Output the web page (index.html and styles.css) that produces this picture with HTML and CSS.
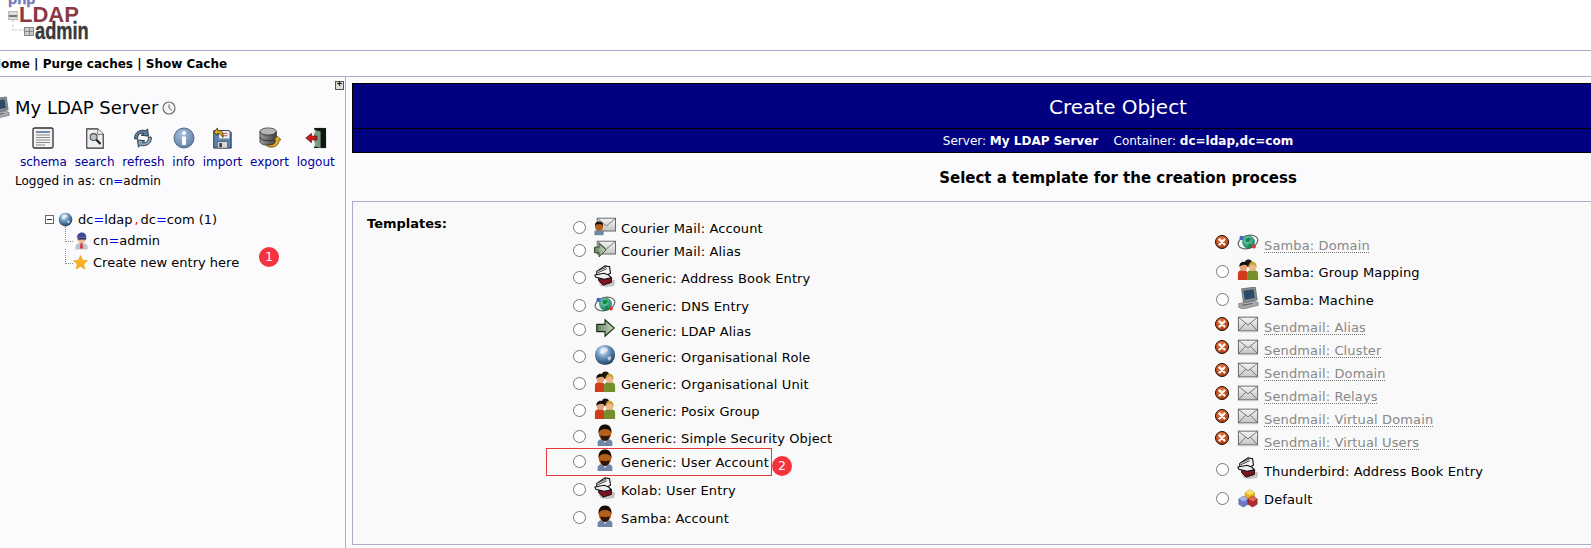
FILE: index.html
```html
<!DOCTYPE html>
<html lang="en">
<head>
<meta charset="utf-8">
<title>phpLDAPadmin</title>
<link rel="stylesheet" href="styles.css">
</head>
<body>
<svg class="defs" width="0" height="0" aria-hidden="true">
  <defs>
    <linearGradient id="gMail" x1="0" y1="0" x2="0" y2="1"><stop offset="0" stop-color="#f4f4f4"/><stop offset="1" stop-color="#c4c4c4"/></linearGradient>
    <linearGradient id="gArrow" x1="0" y1="0" x2="1" y2="0"><stop offset="0" stop-color="#5f7f58"/><stop offset="1" stop-color="#cfe0c6"/></linearGradient>
    <radialGradient id="gGlobe" cx=".4" cy=".3" r=".8"><stop offset="0" stop-color="#e8f0f8"/><stop offset=".45" stop-color="#5f8db8"/><stop offset="1" stop-color="#12304f"/></radialGradient>
    <radialGradient id="gGreen" cx=".4" cy=".35" r=".7"><stop offset="0" stop-color="#7fd8c0"/><stop offset="1" stop-color="#0c7a52"/></radialGradient>
    <radialGradient id="gErr" cx=".4" cy=".3" r=".8"><stop offset="0" stop-color="#ee7a40"/><stop offset="1" stop-color="#a83208"/></radialGradient>
    <radialGradient id="gInfo" cx=".4" cy=".3" r=".8"><stop offset="0" stop-color="#a8c0dc"/><stop offset="1" stop-color="#5878a0"/></radialGradient>
    <linearGradient id="gDb" x1="0" y1="0" x2="1" y2="0"><stop offset="0" stop-color="#9a9a9a"/><stop offset="1" stop-color="#404040"/></linearGradient>

    <symbol id="i-mail" viewBox="0 0 24 20">
      <rect x="1.500" y="2.500" width="21" height="15" fill="url(#gMail)" stroke="#606060"/>
      <path d="M2 3l10 8 10-8M2 17l7.500-8M22 17l-7.500-8" fill="none" stroke="#707070"/>
      <path d="M2 18.500h21" stroke="#c8c8c8"/>
    </symbol>
    <symbol id="i-user" viewBox="0 0 24 24">
      <path d="M4 24v-4c0-3 4-4 8-4s8 1 8 4v4z" fill="#6f87a6"/>
      <path d="M10 17h4l-2 4z" fill="#e8e8e8"/>
      <ellipse cx="12" cy="9.500" rx="7" ry="8.500" fill="#b4601c"/>
      <path d="M5 10C4.500 3 8 .5 12 .5s7.500 2.500 7 9.500c-1-3-3-4.500-7-4.500S6 7 5 10z" fill="#140c06"/>
      <path d="M7 12c2 1.500 8 1.500 10 0 0 4-2 6.500-5 6.500S7 16 7 12z" fill="#2e180a"/>
    </symbol>
    <symbol id="i-mailuser" viewBox="0 0 24 20">
      <rect x="3.500" y="1.500" width="20" height="14" fill="url(#gMail)" stroke="#606060"/>
      <path d="M4 2l9.500 8L23 2" fill="none" stroke="#707070"/>
      <rect x="0.500" y="15" width="10" height="5" fill="#6f87a6"/>
      <ellipse cx="5.500" cy="10.500" rx="4.500" ry="5" fill="#b4601c"/>
      <path d="M1 10c0-4 2-5 4.500-5s4.500 1 4.500 5c-1-2-2-2-4.500-2S2 8 1 10z" fill="#1e1208"/>
    </symbol>
    <symbol id="i-mailarrow" viewBox="0 0 24 20">
      <rect x="3.500" y="1.500" width="20" height="14" fill="url(#gMail)" stroke="#606060"/>
      <path d="M4 2l9.500 8L23 2" fill="none" stroke="#707070"/>
      <path d="M.5 8h5V3.500L13 11l-7.500 7.500V14h-5z" fill="url(#gArrow)" stroke="#2c3c28"/>
    </symbol>
    <symbol id="i-arrow" viewBox="0 0 24 24">
      <path d="M3 8h9V3l10 9-10 9v-5H3z" fill="url(#gArrow)" stroke="#1c2c18" stroke-width="1.200"/>
    </symbol>
    <symbol id="i-book" viewBox="0 0 24 24">
      <path d="M7 23l-2-4 10-5 8 3-1 6-9 1z" fill="#909090" opacity=".5"/>
      <path d="M5 13l9-3 5 4v5l-9 3-5-5z" fill="#7a1424" stroke="#1c0408"/>
      <path d="M3 7l9-6 5 1 1 7-6 3-9-1z" fill="#f6f6f6" stroke="#101010" stroke-width="1.200"/>
      <path d="M1 11l10-2 5 2 3 3-8 1.500-9-2z" fill="#eeeeee" stroke="#101010" stroke-width="1.200"/>
      <path d="M5 6l8-3.500M4 8.500l10-4.500" stroke="#303030" fill="none"/>
    </symbol>
    <symbol id="i-dns" viewBox="0 0 24 20">
      <ellipse cx="12" cy="10" rx="11" ry="7" fill="none" stroke="#606060" stroke-width="1.300" transform="rotate(-18 12 10)"/>
      <circle cx="12.500" cy="10" r="7" fill="url(#gGreen)"/>
      <path d="M9 7c2-2 5-2 6 0l-2 3-3 0zM12 13l3-1 0 3-2 1z" fill="#12883e"/>
      <circle cx="5" cy="5.500" r="2.400" fill="#3a66c8"/>
      <circle cx="18.500" cy="15" r="2.200" fill="#d83a3a"/>
    </symbol>
    <symbol id="i-globe" viewBox="0 0 24 24">
      <circle cx="12" cy="12" r="11" fill="url(#gGlobe)"/>
      <path d="M8 5c3-2 6-1 7 1s-2 2-4 4-3 1-4 0 0-4 1-5zM15 14c2-1 4 0 4 1s-2 4-3 3-2-3-1-4z" fill="#f0f4f8" opacity=".7"/>
    </symbol>
    <symbol id="i-group" viewBox="0 0 24 24">
      <circle cx="12.500" cy="4.500" r="4" fill="#1e1612"/>
      <path d="M1 23v-7c0-3 3-4 5.500-4s5 1 5 4v7z" fill="#d03c1c"/>
      <path d="M11 23v-7c0-3 3-4 6-4s6 1 6 4v7z" fill="#75902a"/>
      <circle cx="7" cy="9" r="4" fill="#e0a078"/>
      <path d="M2.500 8.500c0-4 2.500-5.500 4.500-5.500s4.500 1 4.500 4c-2-1-6-1-9 1.500z" fill="#0e0a08"/>
      <circle cx="17" cy="9" r="4" fill="#ecb888"/>
      <path d="M12.500 9.500c0-4.500 2-6.500 4.500-6.500s4.500 2 4.500 6.500c-1-2-2-3.500-4.500-3.500s-3 1.500-4.500 3.500z" fill="#c8a030"/>
    </symbol>
    <symbol id="i-computer" viewBox="0 0 24 24">
      <path d="M5 2l15-2 2 14-15 3z" fill="#8a8f94" stroke="#55595e" stroke-width=".7"/>
      <path d="M7 4l11-1.500 1.500 9.500-11 2z" fill="#2c4a68"/>
      <path d="M2 18l17-3 4 2v3L6 24l-4-2z" fill="#a8acb0" stroke="#60646a" stroke-width=".7"/>
      <path d="M5 20l12-2" stroke="#50545a" fill="none"/>
    </symbol>
    <symbol id="i-cubes" viewBox="0 0 24 24">
      <path d="M9 7l5-3 5 3v6l-5 3-5-3z" fill="#f2b010" stroke="#8a6000" stroke-width=".5"/>
      <path d="M9 7l5 3 5-3-5-3z" fill="#fbe070"/>
      <path d="M2 14l5-3 5 3v6l-5 3-5-3z" fill="#7078c8" stroke="#383c78" stroke-width=".5"/>
      <path d="M2 14l5 3 5-3-5-3z" fill="#aab0e8"/>
      <path d="M12 14l5-3 5 3v6l-5 3-5-3z" fill="#b02c30" stroke="#601010" stroke-width=".5"/>
      <path d="M12 14l5 3 5-3-5-3z" fill="#dc6a60"/>
    </symbol>
    <symbol id="i-err" viewBox="0 0 14 14">
      <circle cx="7" cy="7" r="6.500" fill="url(#gErr)" stroke="#200a04"/>
      <path d="M4.500 4.500l5 5M9.500 4.500l-5 5" stroke="#fff" stroke-width="2.200" stroke-linecap="round"/>
    </symbol>
    <symbol id="i-schema" viewBox="0 0 22 22">
      <rect x="1" y="1" width="20" height="20" rx="1.500" fill="#f2f2f2" stroke="#303030" stroke-width="1.300"/>
      <path d="M4 5h14" stroke="#486a9c" stroke-width="1.500"/>
      <path d="M4 8h14M4 10.500h14M4 13h14M4 15.500h14M4 18h9" stroke="#8c8c8c"/>
    </symbol>
    <symbol id="i-search" viewBox="0 0 22 24">
      <path d="M2 2h12l6 6v15H2z" fill="#eeeeee" stroke="#303030" stroke-width="1.200"/>
      <path d="M14 2v6h6" fill="#fff" stroke="#606060"/>
      <circle cx="9.500" cy="11" r="3.800" fill="#b8c4cc" stroke="#505050" stroke-width="1.200"/>
      <path d="M12.500 14l4.500 4.500" stroke="#202020" stroke-width="2.400"/>
    </symbol>
    <symbol id="i-refresh" viewBox="0 0 24 24">
      <path d="M3 13C2 6 9 2 15 4l2-2 1 8-8-1 3-2c-4-1-7 1-7 6z" fill="#5e7c9e" stroke="#24303e" stroke-width="1"/>
      <path d="M21 11c1 7-6 11-12 9l-2 2-1-8 8 1-3 2c4 1 7-1 7-6z" fill="#8aa4c2" stroke="#24303e" stroke-width="1"/>
    </symbol>
    <symbol id="i-info" viewBox="0 0 22 22">
      <circle cx="11" cy="11" r="10" fill="url(#gInfo)" stroke="#506a8c"/>
      <circle cx="11" cy="6" r="2" fill="#fff"/>
      <rect x="9" y="9.500" width="4" height="8.500" fill="#fff"/>
    </symbol>
    <symbol id="i-import" viewBox="0 0 22 24">
      <path d="M2 4h17l2 2v17H2z" fill="#5c84ac" stroke="#1c2838"/>
      <rect x="8" y="4.500" width="11" height="8" fill="#f2f2f2"/>
      <path d="M10 7h7M10 9.500h7" stroke="#c84848"/>
      <rect x="6" y="16" width="11" height="7" fill="#d8d8d8" stroke="#404040" stroke-width=".6"/>
      <rect x="8" y="17.500" width="3" height="4.500" fill="#404040"/>
      <path d="M2 6l4-5v2.500c5 0 7 3 6 8-1-3-3-4.500-6-4.500V9z" fill="#e0a820" stroke="#3a2800" stroke-width=".8"/>
    </symbol>
    <symbol id="i-export" viewBox="0 0 24 24">
      <ellipse cx="10" cy="5" rx="9" ry="4" fill="#b4b4b4" stroke="#303030" stroke-width=".8"/>
      <path d="M1 5v11c0 2 4 4 9 4s9-2 9-4V5c0 2-4 4-9 4S1 7 1 5z" fill="url(#gDb)" stroke="#303030" stroke-width=".8"/>
      <path d="M1 11c0 2 4 4 9 4s9-2 9-4" fill="none" stroke="#282828"/>
      <path d="M9 19c6 2 9-1 9-5l-2 0 4-4 4 4-2 0c0 6-6 10-13 7z" fill="#e0b030" stroke="#4a3400" stroke-width=".8"/>
    </symbol>
    <symbol id="i-logout" viewBox="0 0 24 24">
      <rect x="10" y="1" width="13" height="22" fill="#101810"/>
      <path d="M10 3l7 2v18l-7-2z" fill="#7a9a80"/>
      <path d="M10 3v4M10 16v5" stroke="#e8e8e8" stroke-width="2"/>
      <path d="M1 12l6-5v3h6v4H7v3z" fill="#d81818" stroke="#400808" stroke-width=".8"/>
    </symbol>
    <symbol id="i-clock" viewBox="0 0 14 14">
      <circle cx="7" cy="7" r="6" fill="#f4f4f4" stroke="#707070" stroke-width="1.200"/>
      <path d="M7 3.500V7l3 2.500" fill="none" stroke="#606060"/>
    </symbol>
    <symbol id="i-admin" viewBox="0 0 16 18">
      <path d="M1.500 18v-3c0-3 3-4 6.500-4s6.500 1 6.500 4v3z" fill="#bfc4cc"/>
      <path d="M7 11h2l.7 6H6.300z" fill="#d83a3a"/>
      <ellipse cx="8" cy="6.500" rx="4.500" ry="5" fill="#eab890"/>
      <path d="M3 6C3 1.500 6 0 8.500 0S13.500 2 13 5H4z" fill="#3c4a9c"/>
      <rect x="4" y="5.300" width="9" height="2.200" fill="#28306a"/>
    </symbol>
    <symbol id="i-star" viewBox="0 0 16 16">
      <path d="M8 .5l2.200 5 5.300.5-4 3.500 1.200 5.500L8 12.200 3.300 15l1.200-5.500-4-3.500 5.300-.5z" fill="#fbb01c" stroke="#e09010" stroke-width=".5"/>
    </symbol>
  </defs>
</svg>

<header class="masthead">
  <div class="logo">
    <span class="logo-php">php</span>
    <span class="logo-ldap">LDAP</span>
    <span class="logo-admin">admin</span>
    <span class="logo-min"></span>
    <span class="logo-plus"></span>
    <span class="logo-dots"></span>
  </div>
</header>
<nav class="menu"><b>Home</b> | <b>Purge caches</b> | <b>Show Cache</b></nav>

<div class="page">
  <aside class="side">
    <div class="side-expand"><span class="expand-btn">+</span></div>
    <div class="server">
      <svg class="server-ic"><use href="#i-computer"/></svg>
      <span class="server-name">My LDAP Server</span>
      <svg class="clock"><use href="#i-clock"/></svg>
    </div>
    <div class="tools">
      <a class="tool"><svg><use href="#i-schema"/></svg>schema</a>
      <a class="tool"><svg><use href="#i-search"/></svg>search</a>
      <a class="tool"><svg><use href="#i-refresh"/></svg>refresh</a>
      <a class="tool"><svg><use href="#i-info"/></svg>info</a>
      <a class="tool"><svg><use href="#i-import"/></svg>import</a>
      <a class="tool"><svg><use href="#i-export"/></svg>export</a>
      <a class="tool"><svg><use href="#i-logout"/></svg>logout</a>
    </div>
    <div class="logged">Logged in as: cn<i class="eq">=</i>admin</div>
    <div class="tree">
      <div class="tree-root">
        <span class="tree-min"></span>
        <svg class="tree-globe"><use href="#i-globe"/></svg>
        <span>dc<i class="eq">=</i>ldap<i class="comma">,</i>dc<i class="eq">=</i>com (1)</span>
      </div>
      <div class="tree-kid tree-kid-user">
        <svg class="tree-admin"><use href="#i-admin"/></svg>
        <span>cn<i class="eq">=</i>admin</span>
      </div>
      <div class="tree-kid tree-kid-new">
        <svg class="tree-star"><use href="#i-star"/></svg>
        <span>Create new entry here</span>
        <span class="badge badge-1">1</span>
      </div>
    </div>
  </aside>

  <main class="main">
    <div class="banner">
      <h1 class="title">Create Object</h1>
      <div class="subtitle"><b>Server:</b> <b class="w">My LDAP Server</b> &nbsp;&nbsp; <b>Container:</b> <b class="w">dc=ldap,dc=com</b></div>
    </div>
    <h2 class="heading">Select a template for the creation process</h2>
    <section class="box">
      <div class="box-label">Templates:</div>
      <div class="col col-left">
        <label class="tpl"><input type="radio" name="t"><svg class="ic"><use href="#i-mailuser"/></svg><span class="txt">Courier Mail: Account</span></label>
        <label class="tpl"><input type="radio" name="t"><svg class="ic"><use href="#i-mailarrow"/></svg><span class="txt">Courier Mail: Alias</span></label>
        <label class="tpl"><input type="radio" name="t"><svg class="ic"><use href="#i-book"/></svg><span class="txt">Generic: Address Book Entry</span></label>
        <label class="tpl"><input type="radio" name="t"><svg class="ic"><use href="#i-dns"/></svg><span class="txt">Generic: DNS Entry</span></label>
        <label class="tpl"><input type="radio" name="t"><svg class="ic"><use href="#i-arrow"/></svg><span class="txt">Generic: LDAP Alias</span></label>
        <label class="tpl"><input type="radio" name="t"><svg class="ic"><use href="#i-globe"/></svg><span class="txt">Generic: Organisational Role</span></label>
        <label class="tpl"><input type="radio" name="t"><svg class="ic"><use href="#i-group"/></svg><span class="txt">Generic: Organisational Unit</span></label>
        <label class="tpl"><input type="radio" name="t"><svg class="ic"><use href="#i-group"/></svg><span class="txt">Generic: Posix Group</span></label>
        <label class="tpl"><input type="radio" name="t"><svg class="ic"><use href="#i-user"/></svg><span class="txt">Generic: Simple Security Object</span></label>
        <label class="tpl tpl-mark"><input type="radio" name="t"><svg class="ic"><use href="#i-user"/></svg><span class="txt">Generic: User Account</span><span class="badge badge-2">2</span></label>
        <label class="tpl"><input type="radio" name="t"><svg class="ic"><use href="#i-book"/></svg><span class="txt">Kolab: User Entry</span></label>
        <label class="tpl"><input type="radio" name="t"><svg class="ic"><use href="#i-user"/></svg><span class="txt">Samba: Account</span></label>
      </div>
      <div class="col col-right">
        <div class="tpl off"><svg class="err"><use href="#i-err"/></svg><svg class="ic"><use href="#i-dns"/></svg><span class="dis">Samba: Domain</span></div>
        <label class="tpl"><input type="radio" name="t"><svg class="ic"><use href="#i-group"/></svg><span class="txt">Samba: Group Mapping</span></label>
        <label class="tpl"><input type="radio" name="t"><svg class="ic"><use href="#i-computer"/></svg><span class="txt">Samba: Machine</span></label>
        <div class="tpl off"><svg class="err"><use href="#i-err"/></svg><svg class="ic"><use href="#i-mail"/></svg><span class="dis">Sendmail: Alias</span></div>
        <div class="tpl off"><svg class="err"><use href="#i-err"/></svg><svg class="ic"><use href="#i-mail"/></svg><span class="dis">Sendmail: Cluster</span></div>
        <div class="tpl off"><svg class="err"><use href="#i-err"/></svg><svg class="ic"><use href="#i-mail"/></svg><span class="dis">Sendmail: Domain</span></div>
        <div class="tpl off"><svg class="err"><use href="#i-err"/></svg><svg class="ic"><use href="#i-mail"/></svg><span class="dis">Sendmail: Relays</span></div>
        <div class="tpl off"><svg class="err"><use href="#i-err"/></svg><svg class="ic"><use href="#i-mail"/></svg><span class="dis">Sendmail: Virtual Domain</span></div>
        <div class="tpl off"><svg class="err"><use href="#i-err"/></svg><svg class="ic"><use href="#i-mail"/></svg><span class="dis">Sendmail: Virtual Users</span></div>
        <label class="tpl"><input type="radio" name="t"><svg class="ic"><use href="#i-book"/></svg><span class="txt">Thunderbird: Address Book Entry</span></label>
        <label class="tpl"><input type="radio" name="t"><svg class="ic"><use href="#i-cubes"/></svg><span class="txt">Default</span></label>
      </div>
    </section>
  </main>
</div>
</body>
</html>
```
FILE: styles.css
```css
* { box-sizing: border-box; }
html, body { margin: 0; height: 548px; overflow: hidden; }
body {
  width: 1591px;
  background: #fff;
  color: #000;
  font: 13px/16px "DejaVu Sans", Verdana, sans-serif;
}
.defs { position: absolute; }
i { font-style: normal; }
.eq { color: #0000ff; }
.comma { color: #f00; margin: 0 2px; }

.masthead { height: 51px; border-bottom: 1px solid #aaaacc; overflow: hidden; }
.logo { position: relative; width: 100px; height: 50px; }
.logo span { position: absolute; font-family: "Liberation Sans", Arial, sans-serif; font-weight: bold; white-space: nowrap; }
.logo-php { left: 8px; top: -9px; font-size: 15px; line-height: 16px; color: #7478b4; -webkit-text-stroke: .3px #7478b4; }
.logo-ldap { left: 19px; top: 3px; font-size: 22px; line-height: 24px; color: #8a3a42; }
.logo-admin { left: 35px; top: 19px; font-size: 24px; line-height: 24px; color: #3a3a3a; -webkit-text-stroke: .4px #3a3a3a; transform: scaleX(.76); transform-origin: 0 0; }
.logo .logo-min { left: 8px; top: 11px; width: 10px; height: 9px; background: linear-gradient(#ddd 0 3px, #777 3px 5px, #ddd 5px); border: 1px solid #bbb; }
.logo .logo-plus { left: 24px; top: 27px; width: 10px; height: 9px; border: 1px solid #888; background: linear-gradient(#888, #888) center/100% 1px no-repeat, linear-gradient(#888, #888) center/1px 100% no-repeat, #ccc; }
.logo .logo-dots { left: 12px; top: 20px; width: 12px; height: 11px; border-left: 2px dotted #ddd; border-bottom: 2px dotted #ddd; }

.menu {
  height: 26px;
  padding-top: 5px;
  margin-left: -9px;
  width: 1600px;
  border-bottom: 1px solid #aaaacc;
  font-size: 12px;
  font-weight: bold;
  white-space: pre;
}
.menu b { font-weight: bold; }

.page { display: flex; height: 471px; background: #fbfbfe; }

.side { width: 346px; flex: none; border-right: 1px solid #aaaacc; padding-top: 4px; }
.side-expand { display: flex; justify-content: flex-end; padding-right: 1px; height: 15px; }
.expand-btn {
  width: 9px; height: 9px;
  border: 1px solid #555;
  background: #ddd;
  font: bold 9px/7px "Liberation Mono", monospace;
  text-align: center;
}
.server { display: flex; align-items: center; height: 24px; margin-left: -12px; }
.server-ic { width: 22px; height: 24px; margin-right: 5px; }
.server-name { font-size: 18px; line-height: 24px; }
.clock { width: 14px; height: 14px; margin-left: 4px; }

.tools { display: flex; gap: 7.800px; padding-left: 20px; margin-top: 7px; }
.tool { display: flex; flex-direction: column; align-items: center; color: #000099; font-size: 12px; line-height: 16px; }
.tool svg { width: 22px; height: 22px; margin-bottom: 5px; }
.logged { margin: 3px 0 0 15px; font-size: 12px; }

.tree { margin: 20px 0 0 45px; position: relative; }
.tree-root { display: flex; align-items: center; height: 21px; position: relative; }
.tree-min {
  width: 9px; height: 9px; border: 1px solid #666; background: #fff;
  margin-right: 4px; flex: none;
  background-image: linear-gradient(#333, #333);
  background-size: 5px 1px; background-position: center; background-repeat: no-repeat;
}
.tree-globe { width: 15px; height: 15px; margin-right: 5px; }
.tree-kid { display: flex; align-items: center; height: 21px; position: relative; padding-left: 28px; }
.tree-kid::before {
  content: ""; position: absolute; left: 20px; top: -3px; width: 7px; height: 14px;
  border-left: 1px dotted #888; border-bottom: 1px dotted #888;
}
.tree-kid-new { margin-top: 1px; }
.tree-admin { width: 15px; height: 18px; margin: 0 4px 0 1px; }
.tree-star { width: 15px; height: 15px; margin-right: 5px; }
.badge {
  position: absolute;
  width: 20px; height: 20px;
  border-radius: 50%;
  background: #f5333f;
  color: #fff;
  font: 12px/20px "DejaVu Sans", sans-serif;
  text-align: center;
}
.badge-1 { left: 214px; top: -5px; }
.badge-2 { left: 200px; top: 8px; }

.main { flex: none; width: 1538px; padding: 6px 0 0 6px; }
.banner { background: #000080; border: 1px solid #000; color: #fff; text-align: center; }
.title {
  margin: 0; height: 45px;
  font-size: 20px; line-height: 47px; font-weight: normal;
  border-bottom: 1px solid #000;
}
.subtitle { height: 23px; line-height: 24px; font-size: 12px; }
.subtitle b { font-weight: normal; }
.subtitle .w { font-weight: bold; }
.heading { margin: 0; height: 48px; padding-top: 16px; font-size: 15px; line-height: 18px; font-weight: bold; text-align: center; }

.box {
  display: grid;
  grid-template-columns: 205px 643px 1fr;
  height: 344px;
  padding: 14px 0 0 14px;
  background: #f9f9f9;
  border: 1px solid #aaaacc;
}
.box-label { font-weight: bold; line-height: 14px; margin-top: 1px; }
.col { display: grid; justify-items: start; }
.col-left { grid-template-rows: 22px 24px 30px 26px 23px 30px 24px 30px 23px 26px 30px 26px; align-content: start; }
.col-right { grid-template-rows: 28px 28px 28px 24px 22px 24px 22px 24px 21px 39px 18px; align-content: start; margin-top: 13px; }

.tpl { display: flex; align-items: center; position: relative; white-space: nowrap; }
.tpl input { width: 13px; height: 13px; margin: 0 0 0 1px; flex: none; }
.tpl .ic { width: 22px; height: 22px; margin: -3px 5px 0 8px; flex: none; }
.txt { margin-top: 4px; letter-spacing: .13px; }
.err { width: 14px; height: 14px; flex: none; }
.off .err { margin-top: -3px; }
.off .ic { margin-top: -3px; }
.dis {
  color: #888;
  margin-top: 6px;
  letter-spacing: .13px;
  text-decoration: underline dotted #777 1px;
  text-underline-offset: 2px;
}
.tpl-mark::before {
  content: ""; position: absolute; left: -26px; top: 0; width: 224px; height: 26px;
  border: 1px solid #e83b3b;
}
```
